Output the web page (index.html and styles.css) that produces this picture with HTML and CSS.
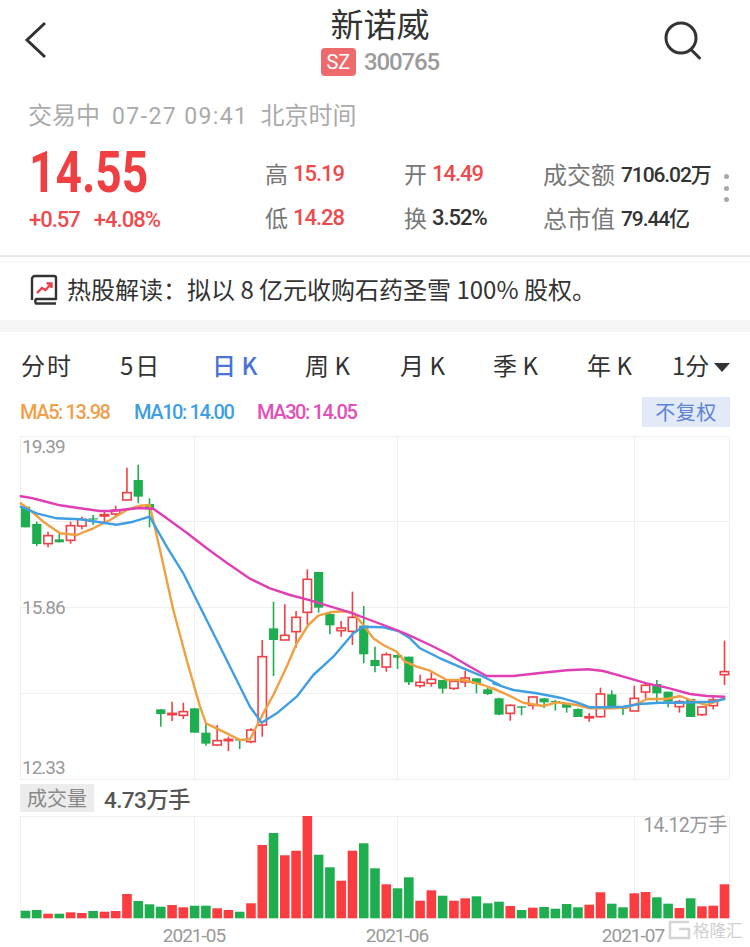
FILE: index.html
```html
<!DOCTYPE html>
<html lang="zh-CN">
<head>
<meta charset="utf-8">
<title>新诺威</title>
<link rel="stylesheet" href="styles.css">
</head>
<body>
<main class="page">
  <header class="topbar">
    <svg class="icon-back" width="24" height="40" viewBox="0 0 24 40"><polyline points="21,3 3,20 21,37"/></svg>
    <div class="title-block">
      <h1 class="title">新诺威</h1>
      <div class="code-row"><span class="market">SZ</span><span class="code din">300765</span></div>
    </div>
    <svg class="icon-search" width="40" height="40" viewBox="0 0 40 40"><circle cx="18" cy="17" r="15"/><line x1="28.5" y1="29" x2="36.5" y2="37"/></svg>
  </header>

  <section class="quote">
    <div class="status">交易中<span class="status-time din-wide">07-27 09:41</span>北京时间</div>
    <div class="quote-grid">
      <div class="price-block">
        <div class="price din">14.55</div>
        <div class="change din"><span>+0.57</span><span>+4.08%</span></div>
      </div>
      <div class="stat-col">
        <div class="stat"><span class="label">高</span><span class="val red din">15.19</span></div>
        <div class="stat"><span class="label">低</span><span class="val red din">14.28</span></div>
      </div>
      <div class="stat-col">
        <div class="stat"><span class="label">开</span><span class="val red din">14.49</span></div>
        <div class="stat"><span class="label">换</span><span class="val dark din">3.52%</span></div>
      </div>
      <div class="stat-col stat-col-wide">
        <div class="stat"><span class="label">成交额</span><span class="val dark din">7106.02万</span></div>
        <div class="stat"><span class="label">总市值</span><span class="val dark din">79.44亿</span></div>
      </div>
      <div class="more"><i></i><i></i><i></i></div>
    </div>
  </section>

  <section class="news">
    <svg class="icon-book" width="28" height="31" viewBox="0 0 28 31">
      <path class="book-line" d="M2 26V5a3 3 0 0 1 3-3h19a2 2 0 0 1 2 2v21H6a4 4 0 0 0 0 4.500h20"/>
      <path class="book-arrow" d="M7 19l5-5 3.500 2L21 10M16.500 9.500H21.500V14"/>
    </svg>
    <p class="news-text">热股解读：拟以 8 亿元收购石药圣雪 100% 股权。</p>
  </section>

  <section class="chart-card">
    <nav class="tabs">
      <span class="tab">分时</span>
      <span class="tab tab-5">5日</span>
      <span class="tab active">日 K</span>
      <span class="tab">周 K</span>
      <span class="tab">月 K</span>
      <span class="tab">季 K</span>
      <span class="tab">年 K</span>
      <span class="tab tab-menu">1分<i class="caret"></i></span>
    </nav>
    <div class="ma-row">
      <span class="ma ma5 din">MA5: 13.98</span>
      <span class="ma ma10 din">MA10: 14.00</span>
      <span class="ma ma30 din">MA30: 14.05</span>
      <span class="adjust">不复权</span>
    </div>
    <svg id="kline" class="kline" width="750" height="350" viewBox="0 432 750 350">
      <g class="grid">
        <line x1="20" y1="436.500" x2="730" y2="436.500"/>
        <line x1="20" y1="521.500" x2="730" y2="521.500"/>
        <line x1="20" y1="607.500" x2="730" y2="607.500"/>
        <line x1="20" y1="693.500" x2="730" y2="693.500"/>
        <line x1="20" y1="779.500" x2="730" y2="779.500"/>
        <line x1="20.500" y1="436" x2="20.500" y2="780"/>
        <line x1="194.500" y1="436" x2="194.500" y2="780"/>
        <line x1="397.500" y1="436" x2="397.500" y2="780"/>
        <line x1="634.500" y1="436" x2="634.500" y2="780"/>
        <line x1="729.500" y1="436" x2="729.500" y2="780"/>
      </g>
      <text class="axis din" x="22" y="453">19.39</text>
      <text class="axis din" x="22" y="614">15.86</text>
      <text class="axis din" x="22" y="774">12.33</text>
    </svg>
    <div class="vol-head">
      <span class="vol-tag">成交量</span>
      <span class="vol-val din">4.73万手</span>
    </div>
    <svg id="volume" class="volume" width="750" height="131" viewBox="0 816 750 131">
      <g class="grid">
        <line x1="20" y1="816.500" x2="730" y2="816.500"/>
        <line x1="20.500" y1="816" x2="20.500" y2="918"/>
        <line x1="194.500" y1="816" x2="194.500" y2="918"/>
        <line x1="397.500" y1="816" x2="397.500" y2="918"/>
        <line x1="634.500" y1="816" x2="634.500" y2="918"/>
        <line x1="729.500" y1="816" x2="729.500" y2="918"/>
      </g>
      <text class="axis axis-vol din" x="727" y="832" text-anchor="end">14.12万手</text>
      <text class="axis din" x="194" y="942" text-anchor="middle">2021-05</text>
      <text class="axis din" x="397" y="942" text-anchor="middle">2021-06</text>
      <text class="axis din" x="633" y="942" text-anchor="middle">2021-07</text>
    </svg>
    <div class="watermark">
      <svg width="23" height="20" viewBox="0 0 23 20"><path d="M21 2H2v16h19V9H11"/></svg>
      <span>格隆汇</span>
    </div>
  </section>
</main>
<script src="chart.js"></script>
</body>
</html>
```
FILE: styles.css
```css
* { box-sizing: border-box; }
html, body { margin: 0; padding: 0; background: #fff; }
body { font-family: "Noto Sans CJK SC", "Noto Sans", sans-serif; color: #333; }
.page { position: relative; width: 750px; height: 947px; overflow: hidden; background: #fff; }
.din { font-family: "Roboto", "Noto Sans CJK SC", sans-serif; }
.din-wide { font-family: "Roboto", "Noto Sans CJK SC", sans-serif; }

.topbar { display: grid; grid-template-columns: 1fr auto 1fr; align-items: start; height: 96px; padding: 20px 14px 0 24px; }
.icon-back polyline, .icon-search circle, .icon-search line { fill: none; stroke: #333; stroke-width: 3; }
.icon-search { justify-self: end; margin: 1px 33px 0 0; }
.icon-search line { stroke-linecap: round; }
.title-block { display: flex; flex-direction: column; align-items: center; margin-top: -22px; }
.title { margin: 0; font-size: 33px; font-weight: 400; line-height: 50px; color: #333; }
.code-row { display: flex; align-items: center; gap: 8px; height: 28px; }
.market { width: 35px; height: 28px; border-radius: 4px; background: #ef6a6c; color: #fff; font: 20px/28px "Roboto", sans-serif; text-align: center; }
.code { font-size: 24px; color: #9b9b9b; line-height: 28px; font-weight: 500; letter-spacing: -1.1px; }

.quote { height: 161px; padding: 0 0 0 28px; border-bottom: 2px solid #e9e9e9; }
.status { font-size: 24px; line-height: 36px; height: 38px; color: #aaa; white-space: nowrap; }
.status-time { margin: 0 12px; font-size: 23px; letter-spacing: 1.4px; }
.quote-grid { display: grid; grid-template-columns: 237px 139px 139px 183px 20px; height: 100px; }
.price { font-size: 57px; line-height: 64px; font-weight: 700; color: #ef3f42; margin: 7px 0 0 1px; transform: scaleX(.81); transform-origin: left center; }
.change { display: flex; gap: 14px; font-size: 22px; line-height: 28px; font-weight: 500; letter-spacing: -1px; color: #ef4a4d; margin: 1px 0 0 1px; }
.stat-col { display: flex; flex-direction: column; gap: 8px; padding-top: 21px; }
.stat { display: flex; align-items: center; gap: 5px; height: 36px; white-space: nowrap; }
.label { font-size: 23px; color: #777; }
.stat-col-wide .label { font-size: 24px; }
.val { font-size: 22px; font-weight: 500; letter-spacing: -1px; }
.stat-col-wide .stat { gap: 6px; }
.stat-col-wide .val { font-size: 21px; letter-spacing: -1.1px; }
.red { color: #ee4a4e; }
.dark { color: #333; }
.more { display: flex; flex-direction: column; gap: 6.5px; padding-top: 40px; margin-left: -2px; }
.more i { display: block; width: 5px; height: 5px; border-radius: 50%; background: #a8a8a8; }

.news { display: flex; align-items: center; gap: 9px; height: 59px; padding: 0 0 4px 30px; border-top: 1px solid #f5f5f5; margin-top: 4px; }
.book-line { fill: none; stroke: #333; stroke-width: 2.4; stroke-linejoin: round; }
.book-arrow { fill: none; stroke: #e8414a; stroke-width: 2.4; }
.news-text { margin: 0; font-size: 24px; line-height: 34px; color: #333; white-space: pre; }

.chart-card { border-top: 12px solid #f5f5f5; }
.tabs { display: grid; grid-template-columns: 99px 92px 93px 95px 93px 94px 85px auto; height: 63px; padding: 15px 0 0 21px; font-size: 24px; line-height: 36px; color: #333; }
.tab { white-space: nowrap; }
.tab:first-child { letter-spacing: 2px; }
.tab-5 { letter-spacing: 2px; }
.active { color: #4a72d8; font-weight: 500; }
.caret { display: inline-block; width: 0; height: 0; margin-left: 5px; border: 8px solid transparent; border-top: 9px solid #333; border-bottom: 0; vertical-align: 3px; }

.ma-row { display: grid; grid-template-columns: 114px 123px 1fr auto; align-items: center; height: 34px; padding: 0 20px; margin-bottom: 3px; }
.ma { font-size: 20px; font-weight: 500; letter-spacing: -1.4px; white-space: nowrap; }
.ma5 { color: #f0a04b; }
.ma10 { color: #3f9fe2; }
.ma30 { color: #e24fb9; }
.adjust { width: 88px; height: 30px; background: #e2eaf8; color: #5f83d4; font-size: 20px; line-height: 30px; text-align: center; letter-spacing: .5px; }

.kline, .volume { display: block; overflow: visible; }
.grid line { stroke: #efefef; stroke-width: 1; }
.axis { font-size: 19px; letter-spacing: -1px; fill: #999; }
.axis-vol { font-size: 19.500px; letter-spacing: -.6px; }
.vol-head { display: flex; align-items: center; gap: 10px; height: 34px; padding: 0 0 2px 20px; }
.vol-tag { width: 74px; height: 28px; background: #ececec; color: #888; font-size: 20px; line-height: 28px; text-align: center; }
.vol-val { font-size: 22.500px; font-weight: 500; letter-spacing: -.6px; color: #555; }

.wick { stroke-width: 1.6; }
.up { stroke: #ef4145; }
.down { stroke: #1eae50; }
.body-up { fill: #fff; stroke: #ef4145; stroke-width: 1.6; }
.body-down { fill: #1eae50; }
.ma-line { fill: none; stroke-width: 2.4; stroke-linejoin: round; stroke-linecap: round; }
.l5 { stroke: #f0a040; }
.l10 { stroke: #3f9fe2; }
.l30 { stroke: #e03fb4; }
.bar-up { fill: #fb3c40; }
.bar-down { fill: #1eae50; }

.watermark { position: absolute; left: 668px; top: 920px; display: flex; align-items: center; gap: 2px; color: #d0d0d0; font-size: 16.500px; line-height: 20px; white-space: nowrap; text-shadow: 0 0 2px #fff, 0 0 2px #fff; }
.watermark path { fill: none; stroke: #d4d4d4; stroke-width: 2.5; }
```
FILE: chart.js
```js
var NS = 'http://www.w3.org/2000/svg';
function add(parent, name, attrs) {
  var el = document.createElementNS(NS, name);
  for (var k in attrs) el.setAttribute(k, attrs[k]);
  parent.appendChild(el);
  return el;
}
function cx(i) { return 25.5 + i * 11.274; }

// [colour, high, bodyTop, bodyBottom, low], values in 3x crop coordinates
var A = [
 ['g',168,170,232,232],['g',215,222,282,288],['r',245,257,281,292],['g',248,268,277,277],
 ['r',215,227,271,281],['r',200,208,228,238],['g',195,205,207,225],['r',185,194,198,220],
 ['r',167,180,192,200],['r',53,128,150,150],['g',44,90,140,160],['g',145,162,178,232],
 ['g',778,778,792,830],['r',755,790,794,813],['r',758,785,796,807],['g',775,775,848,848],
 ['g',820,848,881,887],['r',825,872,885,887],['r',860,868,872,903],['g',868,868,870,897],
 ['r',835,840,875,880]];
var B = [
 ['r',270,320,525,560],['g',155,235,270,378],['r',163,256,270,270],['r',183,202,245,293],
 ['r',58,88,187,225],['g',66,66,173,188],['g',187,192,226,253],['r',213,234,242,260],
 ['r',125,202,244,285],['g',168,227,313,340],['g',290,330,348,367],['r',307,314,351,365],
 ['g',313,315,323,357],['g',320,320,397,405],['r',374,397,407,413],['r',366,388,400,410],
 ['g',390,390,416,430],['r',390,394,415,420],['r',362,384,396,411],['g',385,385,402,430],
 ['g',413,418,432,435]];
var C = [
 ['g',233,235,284,286],['r',253,256,280,302],['g',259,259,263,286],['r',228,231,256,268],
 ['g',235,235,247,264],['g',240,243,246,272],['g',250,250,263,278],['g',265,267,291,291],
 ['r',279,290,293,305],['r',203,222,290,293],['g',211,223,260,262],['g',258,263,265,285],
 ['r',197,235,273,273],['r',188,196,216,235],['g',180,192,220,248],['g',215,215,245,262],
 ['r',240,245,260,278],['g',237,237,291,291],['r',260,261,284,288],['r',228,240,257,268],
 ['r',62,155,164,195]];

var kline = document.getElementById('kline');
var candles = [];
A.forEach(function (c) { candles.push([c, 450]); });
B.forEach(function (c) { candles.push([c, 550]); });
C.forEach(function (c) { candles.push([c, 620]); });
candles.forEach(function (item, i) {
  var c = item[0], o = item[1], x = cx(i), up = c[0] === 'r';
  function y(v) { return o + v / 3; }
  add(kline, 'line', { x1: x, x2: x, y1: y(c[1]), y2: y(c[4]), 'class': 'wick ' + (up ? 'up' : 'down') });
  var h = Math.max(y(c[3]) - y(c[2]), 1.2);
  if (up) add(kline, 'rect', { x: x - 4.2, y: y(c[2]), width: 8.4, height: h, 'class': 'body-up' });
  else add(kline, 'rect', { x: x - 4.6, y: y(c[2]), width: 9.2, height: h, 'class': 'body-down' });
});

function pts(list, ox, oy) {
  return list.map(function (p) { return (ox + p[0] / 3).toFixed(1) + ',' + (oy + p[1] / 3).toFixed(1); }).join(' ');
}
var lines = {
 l5: [
  [[62,160],[90,180],[130,215],[180,250],[230,255],[280,235],[330,210],[380,180],[420,167],[449,165],[480,300],[520,480],[560,630],[600,770],[618,820],[670,845],[720,870],[750,868]], 0, 450,
  [[40,490],[70,435],[110,350],[140,280],[175,225],[205,197],[240,187],[280,184],[310,188],[340,225],[370,265],[400,285],[440,305],[465,335],[500,350],[540,362],[590,390],[640,390],[700,405],[750,425]], 250, 550,
  [[40,205],[90,228],[130,248],[190,258],[230,247],[290,255],[330,265],[400,265],[440,262],[480,248],[500,237],[560,237],[600,228],[630,240],[680,255],[733,235]], 480, 620],
 l10: [
  [[62,170],[110,190],[170,205],[240,208],[300,217],[350,224],[400,215],[449,200],[500,290],[550,370],[600,470],[650,570],[700,670],[750,770]], 0, 450,
  [[35,518],[80,490],[140,440],[190,375],[250,320],[310,250],[340,230],[400,232],[445,243],[480,265],[510,295],[570,325],[640,355],[700,380],[750,405]], 250, 550,
  [[40,190],[100,210],[170,220],[240,233],[290,247],[330,262],[370,262],[430,260],[480,252],[540,248],[600,248],[660,246],[700,245],[733,237]], 480, 620],
 l30: [
  [[62,139],[90,143],[130,153],[180,166],[240,175],[300,183],[340,183],[380,178],[420,174],[460,176],[500,205],[560,248],[620,295],[680,338],[750,386]], 0, 450,
  [[60,115],[120,135],[170,148],[220,163],[300,187],[360,210],[440,240],[480,257],[540,285],[600,315],[660,350],[710,378],[750,378]], 250, 550,
  [[100,168],[180,159],[260,151],[325,148],[370,153],[430,170],[500,190],[560,203],[630,222],[680,228],[733,230]], 480, 620]
};
['l5', 'l10', 'l30'].forEach(function (name) {
  var d = lines[name], s = [];
  for (var i = 0; i < d.length; i += 3) s.push(pts(d[i], d[i + 1], d[i + 2]));
  add(kline, 'polyline', { points: s.join(' '), 'class': 'ma-line ' + name });
});

var vols = 'g910.7 g910 r913.7 g913.7 r912.3 r913 g911 r911.7 r911 r894 g901 g904.3 g906.7 r905 r907.3 g905.7 g905.7 r908.3 r910 g911.7 r903.3 r845 g833 r855.3 r850.7 r816 g854.7 g867.3 r880.7 r850.7 g843.3 g868.3 r884.3 g888.3 g877.3 r900.7 r890.3 g895.7 r900.7 r898.3 g896.3 g903.3 g901.7 r906 g910 r907.7 g907 g908.7 g904 g907.3 r904.7 r892.3 g903.7 g907.3 r893.3 r892 g897.3 g903.7 r908 g898.3 r906.3 r905.7 r884.3'.split(' ');
var volume = document.getElementById('volume');
vols.forEach(function (v, i) {
  var top = parseFloat(v.slice(1));
  add(volume, 'rect', { x: cx(i) - 4.8, y: top, width: 9.6, height: 918.3 - top, 'class': v[0] === 'r' ? 'bar-up' : 'bar-down' });
});
```
